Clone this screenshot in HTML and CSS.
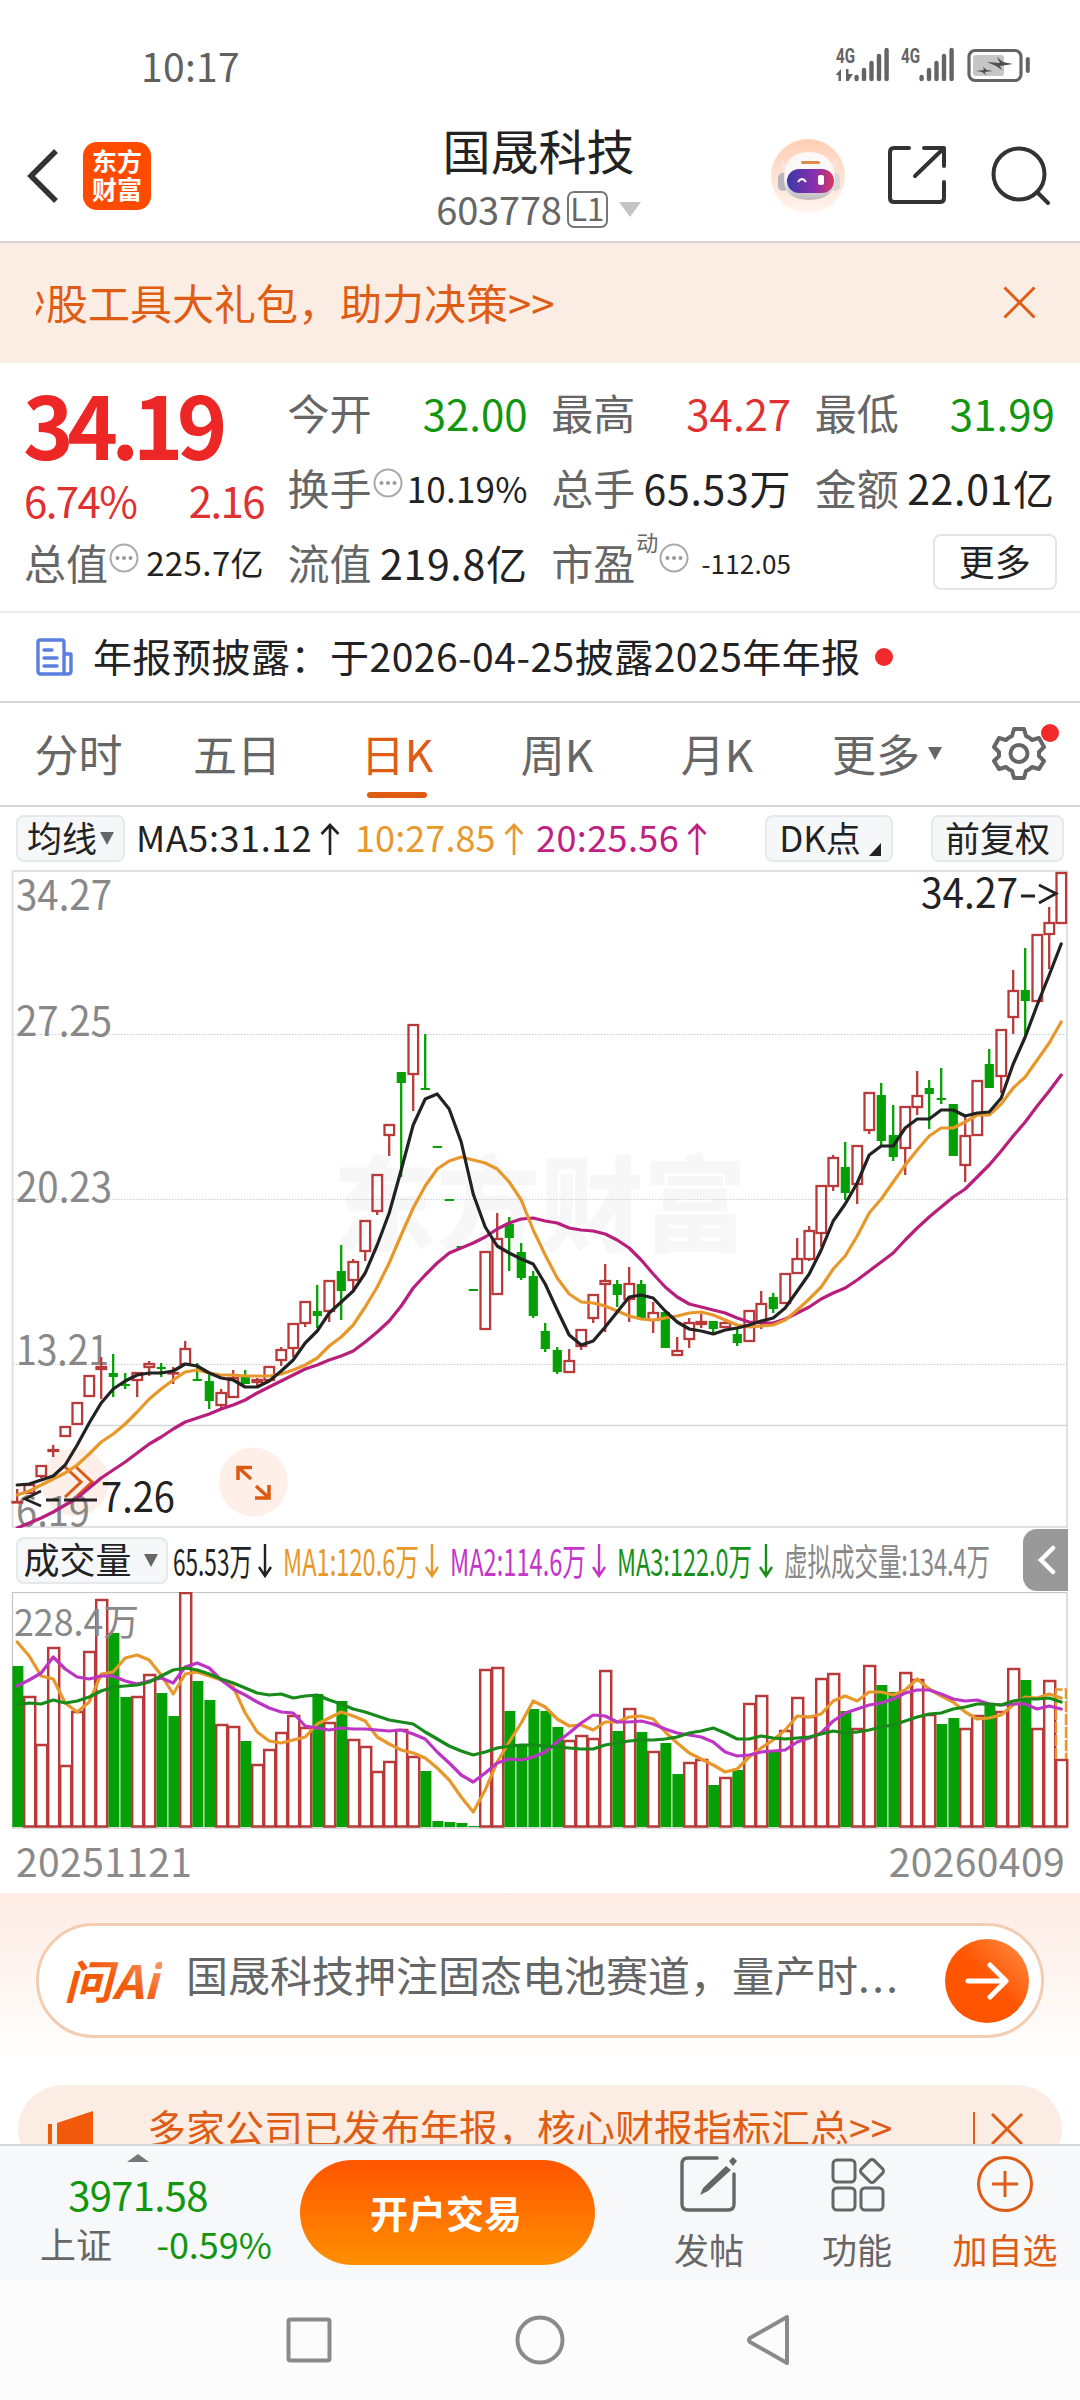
FILE: index.html
```html
<!DOCTYPE html>
<html lang="zh-CN">
<head>
  <meta charset="UTF-8">
  <meta name="viewport" content="width=device-width, initial-scale=1.0">
  <title>国晟科技 603778</title>
  <link rel="stylesheet" href="styles.css">
</head>
<body>

  <div class="status-bar">
    <span class="clock">10:17</span>
    <svg class="status-icons" width="200" height="40" viewBox="832 44 200 40">
      <g fill="#646464">
        <text x="836" y="63" class="net" textLength="19" lengthAdjust="spacingAndGlyphs">4G</text>
        <text x="901" y="63" class="net" textLength="19" lengthAdjust="spacingAndGlyphs">4G</text>
        <path d="M835.500 75l5.500-6v12h-2.500v-6zM846 69h2.500v5h4.500l-4.500 7h-2.500z"/>
      </g>
      <g stroke="#646464" stroke-width="4.400" stroke-linecap="round">
        <path d="M856.600 77v2M864 70v9M871.500 63v16M879 56v23M886.600 50v29"/>
        <path d="M921.600 77v2M929 70v9M936.500 63v16M944 56v23M951.600 50v29"/>
      </g>
      <rect x="969" y="50.500" width="52" height="30" rx="6" fill="none" stroke="#646464" stroke-width="3.200"/>
      <rect x="973" y="55" width="31" height="21" rx="3" fill="#c6c6c6"/>
      <path d="M987 62l13 1-3-6 6 5 10 2-13 2 2 4-6-4zM976 71l8-1-1-3 4 3 6 1-8 1 1 3-4-3z" fill="#505050"/>
      <path d="M1027.800 59v12" stroke="#646464" stroke-width="4" stroke-linecap="round"/>
    </svg>
  </div>

  <header>
    <div class="header-left">
      <svg width="34" height="60" viewBox="0 0 34 60"><path d="M31 5L6 30L31 55" fill="none" stroke="#333" stroke-width="5.500"/></svg>
      <div class="logo"><span>东方</span><span>财富</span></div>
    </div>
    <div class="stock">
      <h1>国晟科技</h1>
      <div class="code">603778<span class="level">L1</span><i class="caret"></i></div>
    </div>
    <div class="header-right">
      <svg width="76" height="76" viewBox="0 0 76 76">
        <defs>
          <linearGradient id="halo" x1="0" y1="0" x2="0" y2="1"><stop offset="0" stop-color="#ffcfb5"/><stop offset="1" stop-color="#fff5ef"/></linearGradient>
          <linearGradient id="visor" x1="0" y1="0" x2="1" y2="0"><stop offset="0" stop-color="#3b3aa8"/><stop offset=".6" stop-color="#8b2fae"/><stop offset="1" stop-color="#d83a5c"/></linearGradient>
          <linearGradient id="helmet" x1="0" y1="0" x2="0" y2="1"><stop offset=".5" stop-color="#fbf8f8"/><stop offset="1" stop-color="#bdb8bd"/></linearGradient>
        </defs>
        <circle cx="38" cy="38" r="37" fill="url(#halo)"/>
        <path d="M9 18q1 7 8 8l3 3-6 6zM68 18q-1 7-7 8l-3 3 5 6z" fill="#f2e9e8"/>
        <rect x="8" y="35" width="10" height="18" rx="5" fill="#b9b5bc"/>
        <rect x="60" y="35" width="10" height="18" rx="5" fill="#d9d5da"/>
        <path d="M14 42Q14 14 39 14Q64 14 65 42Q65 61 39 62Q14 61 14 42z" fill="url(#helmet)"/>
        <rect x="17" y="31" width="47" height="24" rx="12" fill="url(#visor)"/>
        <rect x="31" y="23" width="19" height="3" rx="1.500" fill="#df8a45"/>
        <path d="M28 44q4-6 8 0" fill="none" stroke="#fff" stroke-width="2"/>
        <rect x="48" y="37" width="6" height="10" rx="2" fill="#fff"/>
      </svg>
      <svg class="share" width="60" height="60" viewBox="0 0 60 60" fill="none" stroke="#333" stroke-width="4" stroke-linecap="round" stroke-linejoin="round">
        <path d="M22 3H7Q3 3 3 7V53Q3 57 7 57H53Q57 57 57 53V37M37 3H57V21M56 4L28 31"/>
      </svg>
      <svg class="search" width="60" height="60" viewBox="0 0 60 60" fill="none" stroke="#333" stroke-width="4" stroke-linecap="round">
        <circle cx="28" cy="28" r="25.500"/><path d="M46 46L57 57"/>
      </svg>
    </div>
  </header>

  <div class="banner">
    <div class="marquee"><span>炒股工具大礼包，助力决策&gt;&gt;</span></div>
    <svg width="33" height="33" viewBox="0 0 33 33"><path d="M1.500 1.500L31.500 31.500M31.500 1.500L1.500 31.500" stroke="#de5c14" stroke-width="3"/></svg>
  </div>

  <section class="quote">
    <div class="price-cell">
      <div class="price">34.19</div>
      <div class="change"><span>6.74%</span><span>2.16</span></div>
    </div>
    <div class="cell"><label>今开</label><b class="down">32.00</b></div>
    <div class="cell"><label>最高</label><b class="up">34.27</b></div>
    <div class="cell"><label>最低</label><b class="down">31.99</b></div>
    <div class="cell"><label>换手<svg class="tip"><use href="#tip"/></svg></label><b class="mid">10.19%</b></div>
    <div class="cell"><label>总手</label><b>65.53万</b></div>
    <div class="cell"><label>金额</label><b>22.01亿</b></div>
    <div class="cell"><label>总值<svg class="tip"><use href="#tip"/></svg></label><b class="small">225.7亿</b></div>
    <div class="cell"><label>流值</label><b>219.8亿</b></div>
    <div class="cell"><label>市盈<sup>动</sup><svg class="tip"><use href="#tip"/></svg></label><b class="tiny">-112.05</b></div>
    <div class="cell end"><button class="more">更多</button></div>
  </section>

  <div class="news">
    <svg width="37" height="38" viewBox="0 0 37 38" fill="none" stroke="#5b7fe0" stroke-width="3.400" stroke-linejoin="round" stroke-linecap="round">
      <path d="M28 14V4Q28 2 26 2H4Q2 2 2 4V33Q2 36 5 36H32Q35 36 35 33V16H28V36M8 12H16M8 20H21M8 28H21"/>
    </svg>
    <span>年报预披露：于2026-04-25披露2025年年报</span>
    <i class="dot"></i>
  </div>

  <nav class="tabs">
    <div class="tab">分时</div>
    <div class="tab">五日</div>
    <div class="tab active">日K</div>
    <div class="tab">周K</div>
    <div class="tab">月K</div>
    <div class="tab drop">更多<i class="tri"></i></div>
    <div class="gear">
      <svg width="56" height="56" viewBox="0 0 56 56" fill="none" stroke="#666" stroke-width="4" stroke-linejoin="round">
        <path d="M23 4H33L35 11Q38 12 41 15L48 13L53 22L48 27V31L53 36L48 44L41 42Q38 45 35 46L33 53H23L21 46Q18 45 15 42L8 44L3 36L8 31V27L3 22L8 13L15 15Q18 12 21 11z"/>
        <circle cx="28" cy="28.500" r="8.500"/>
      </svg>
      <i class="dot"></i>
    </div>
  </nav>

  <div class="ma-bar">
    <button class="chip">均线<i class="tri"></i></button>
    <span class="ma ma5">MA5:31.12<svg class="arr"><use href="#arrow-up"/></svg></span>
    <span class="ma ma10">10:27.85<svg class="arr"><use href="#arrow-up"/></svg></span>
    <span class="ma ma20">20:25.56<svg class="arr"><use href="#arrow-up"/></svg></span>
    <button class="chip dk">DK点<i class="corner"></i></button>
    <button class="chip fq">前复权</button>
  </div>

  <svg id="kline" class="chart" width="1080" height="658" viewBox="0 870 1080 658"></svg>

  <div class="vol-bar">
    <button class="chip vol">成交量<i class="tri"></i></button>
    <svg class="vol-legend" width="830" height="60" viewBox="170 1530 830 60">
      <text x="173" y="1576" textLength="79" lengthAdjust="spacingAndGlyphs" fill="#222">65.53万</text>
      <text x="283" y="1576" textLength="136" lengthAdjust="spacingAndGlyphs" fill="#e8982a">MA1:120.6万</text>
      <text x="450" y="1576" textLength="136" lengthAdjust="spacingAndGlyphs" fill="#c436c8">MA2:114.6万</text>
      <text x="617" y="1576" textLength="135" lengthAdjust="spacingAndGlyphs" fill="#16901a">MA3:122.0万</text>
      <text x="784" y="1576" textLength="206" lengthAdjust="spacingAndGlyphs" fill="#888">虚拟成交量:134.4万</text>
      <g fill="none" stroke-width="2.400">
        <path d="M265 1544V1575M259 1567L265 1576L271 1567" stroke="#222"/>
        <path d="M432 1544V1575M426 1567L432 1576L438 1567" stroke="#e8982a"/>
        <path d="M599 1544V1575M593 1567L599 1576L605 1567" stroke="#c436c8"/>
        <path d="M766 1544V1575M760 1567L766 1576L772 1567" stroke="#16901a"/>
      </g>
    </svg>
    <div class="pull"><svg width="18" height="30" viewBox="0 0 18 30"><path d="M15 3L3 15L15 27" fill="none" stroke="#fff" stroke-width="4.500" stroke-linecap="round"/></svg></div>
  </div>

  <svg id="volume" class="chart" width="1080" height="237" viewBox="0 1592 1080 237"></svg>

  <div class="dates"><span>20251121</span><span>20260409</span></div>

  <section class="ai">
    <div class="ai-pill">
      <svg width="98" height="48" viewBox="64 1956 98 48">
        <defs><linearGradient id="ai" x1="0" y1="1" x2="1" y2="0"><stop offset=".5" stop-color="#f25a0c"/><stop offset="1" stop-color="#f9b08a"/></linearGradient></defs>
        <text class="ai-text" x="64" y="1998" fill="url(#ai)" textLength="94" lengthAdjust="spacingAndGlyphs">问Ai</text>
      </svg>
      <p>国晟科技押注固态电池赛道，量产时<span class="dots">...</span></p>
      <div class="go"><svg width="44" height="40" viewBox="0 0 44 40"><path d="M3 20H40M25 4L41 20L25 36" fill="none" stroke="#fff" stroke-width="5" stroke-linecap="round" stroke-linejoin="round"/></svg></div>
    </div>
  </section>

  <div class="notice-wrap">
    <div class="notice">
      <svg width="46" height="50" viewBox="0 0 46 50" fill="#f05a0a"><path d="M0 14H4V40H0zM9 13L45 1V50L9 38z"/><path d="M12 30H28V50H16z"/></svg>
      <span>多家公司已发布年报，核心财报指标汇总&gt;&gt;</span>
      <i class="bar"></i>
      <svg width="32" height="32" viewBox="0 0 32 32"><path d="M1 1L31 31M31 1L1 31" stroke="#de5c14" stroke-width="3"/></svg>
    </div>
  </div>

  <footer>
    <div class="index">
      <i class="tri-up"></i>
      <div class="point">3971.58</div>
      <div class="pct"><span>上证</span><span class="down">-0.59%</span></div>
    </div>
    <button class="trade">开户交易</button>
    <div class="action">
      <svg width="60" height="58" viewBox="0 0 60 58" fill="none" stroke="#666" stroke-width="3.400" stroke-linecap="round">
        <path d="M38 3H9Q3 3 3 9V49Q3 55 9 55H49Q55 55 55 49V19"/>
        <path d="M47 11L52 15L29 36L21 40L24 33zM50 6L54 2L58 6L54 11z" fill="#666" stroke="none"/>
      </svg>
      <span>发帖</span>
    </div>
    <div class="action">
      <svg width="60" height="58" viewBox="0 0 60 58" fill="none" stroke="#666" stroke-width="3">
        <rect x="6" y="5" width="22" height="22" rx="4"/><rect x="6" y="33" width="22" height="22" rx="4"/><rect x="34" y="33" width="22" height="22" rx="4"/>
        <rect x="36" y="7" width="18" height="18" rx="3" transform="rotate(45 45 16)"/>
      </svg>
      <span>功能</span>
    </div>
    <div class="action add">
      <svg width="60" height="58" viewBox="0 0 60 58" fill="none" stroke="#de5c14" stroke-width="3">
        <circle cx="30" cy="29" r="26.500"/><path d="M30 16V42M17 29H43"/>
      </svg>
      <span>加自选</span>
    </div>
  </footer>

  <div class="sys-nav">
    <svg width="1080" height="120" viewBox="0 0 1080 120" fill="none" stroke="#8a8a8a" stroke-width="4">
      <rect x="288.500" y="39.500" width="41" height="41" rx="2"/>
      <circle cx="540" cy="60" r="22.500"/>
      <path d="M787 37V83L750 62Q748 60 750 58z" stroke-linejoin="round"/>
    </svg>
  </div>

  <svg class="defs">
    <symbol id="tip" viewBox="0 0 30 30"><circle cx="15" cy="15" r="13.500" fill="none" stroke="#aaa" stroke-width="2"/><g fill="#999"><circle cx="8.500" cy="15" r="2"/><circle cx="15" cy="15" r="2"/><circle cx="21.500" cy="15" r="2"/></g></symbol>
    <symbol id="arrow-up" viewBox="0 0 20 32"><path d="M10 32V3M1.500 11L10 2L18.500 11" fill="none" stroke="currentColor" stroke-width="2.600"/></symbol>
  </svg>

  <script src="chart.js"></script>
</body>
</html>
```

FILE: styles.css
```css
* {
  box-sizing: border-box;
}

body {
  font-family: 'Noto Sans CJK SC', 'Noto Sans', sans-serif;
  margin: 0;
  width: 1080px;
  height: 2400px;
  overflow: hidden;
  background-color: #fff;
  color: #222;
  line-height: 1;
}

i {
  display: block;
}

svg {
  display: block;
  flex: none;
}

button {
  font-family: inherit;
  line-height: 1;
  padding: 0;
  color: #222;
}

.defs {
  display: none;
}

.down {
  color: #12960f;
}

.up {
  color: #e03030;
}

/* 状态栏 */
.status-bar {
  display: flex;
  justify-content: space-between;
  height: 100px;
  padding: 44px 48px 0 141px;
}

.clock {
  margin-top: 2px;
  font-size: 39px;
  letter-spacing: 0.3px;
  color: #606060;
}

.net {
  font-family: 'Roboto', sans-serif;
  font-size: 21px;
  font-weight: bold;
}

/* 顶部 */
header {
  display: grid;
  grid-template-columns: 340px 1fr 340px;
  height: 143px;
  border-bottom: 2px solid #d4d4d4;
}

.header-left {
  display: flex;
  align-items: center;
  padding-left: 25px;
  padding-bottom: 8px;
  padding-top: 18px;
}

.logo {
  width: 68px;
  height: 68px;
  margin-left: 24px;
  border-radius: 14px;
  background-color: #ff4b00;
  color: #fff;
  display: flex;
  flex-direction: column;
  justify-content: center;
  align-items: center;
  gap: 3px;
  padding-bottom: 3px;
  font-size: 25px;
  font-weight: bold;
}

.stock {
  text-align: center;
}

.stock h1 {
  margin: 24px 0 0 -3px;
  font-size: 48px;
  font-weight: 400;
  line-height: 50px;
}

.code {
  display: flex;
  justify-content: center;
  align-items: center;
  margin: 16px 0 0 -3px;
  height: 38px;
  font-size: 38px;
  letter-spacing: -0.2px;
  color: #666;
}

.level {
  border: 2px solid #777;
  border-radius: 7px;
  width: 41px;
  height: 37px;
  margin-left: 5px;
  font-size: 31px;
  line-height: 29px;
}

.caret {
  margin-left: 11px;
  border: 11px solid transparent;
  border-top: 15px solid #c4c4c4;
  border-bottom: 0;
}

.header-right {
  display: flex;
  align-items: flex-start;
  padding: 38px 0 0 30px;
}

.share {
  margin: 7px 0 0 41px;
}

.search {
  margin: 8px 0 0 44px;
}

.banner {
  display: flex;
  align-items: center;
  justify-content: space-between;
  height: 120px;
  padding: 0 44px 2px 36px;
  background-color: #fcede4;
  color: #de5c14;
}

.marquee {
  width: 540px;
  overflow: hidden;
  font-size: 42px;
  line-height: 60px;
  white-space: nowrap;
}

.marquee span {
  margin-left: -32px;
}

/* 行情 */
.quote {
  display: grid;
  grid-template-columns: repeat(4, 238px);
  grid-template-rows: repeat(3, 75px);
  column-gap: 25.6px;
  height: 250px;
  padding: 11px 0 0 26px;
  border-bottom: 2px solid #ececec;
}

.price-cell {
  grid-row: span 2;
}

.price {
  height: 100px;
  padding-top: 6px;
  margin-left: -3px;
  font-size: 86px;
  font-weight: bold;
  letter-spacing: -6.6px;
  color: #ed2626;
}

.change {
  display: flex;
  justify-content: space-between;
  margin-left: -2px;
  padding-top: 5px;
  font-size: 42px;
  letter-spacing: -1.6px;
  color: #e03030;
}

.cell {
  display: flex;
  justify-content: space-between;
  align-items: center;
  white-space: nowrap;
}

.cell.end {
  justify-content: flex-end;
  margin-right: -2px;
}

.cell label {
  display: flex;
  align-items: center;
  margin-left: -2px;
  font-size: 42px;
  color: #666;
}

.cell sup {
  align-self: flex-start;
  font-size: 22px;
  margin: -11px 0 0 1px;
}

.cell b {
  font-weight: 400;
  font-size: 42px;
  letter-spacing: 0;
  padding-top: 2px;
}

.cell:nth-child(n+5) b {
  font-size: 41px;
  letter-spacing: 0.7px;
}

.cell:nth-child(n+5) b.mid {
  font-size: 35px;
  letter-spacing: 0.2px;
}

.cell:nth-child(n+5) b.small {
  font-size: 33px;
  letter-spacing: 0.4px;
}

.cell:nth-child(n+5) b.tiny {
  font-size: 26px;
  letter-spacing: 0.2px;
}

.tip {
  width: 30px;
  height: 30px;
  margin-left: 1px;
  margin-top: -7px;
}

.more {
  width: 124px;
  height: 56px;
  border: 2px solid #e4e4e4;
  border-radius: 8px;
  background-color: #fff;
  font-size: 36px;
  padding-bottom: 4px;
}

/* 公告 */
.news {
  display: flex;
  align-items: center;
  height: 90px;
  padding-left: 36px;
  border-bottom: 2px solid #d8d8d8;
}

.news span {
  margin: -4px 14px 0 20px;
  font-size: 39px;
  letter-spacing: 0.5px;
}

.dot {
  width: 18px;
  height: 18px;
  border-radius: 50%;
  background-color: #f02a2a;
}

.tabs {
  display: flex;
  align-items: center;
  height: 104px;
  border-bottom: 2px solid #d8d8d8;
  font-size: 44px;
  color: #666;
}

.tab {
  display: flex;
  flex-direction: column;
  justify-content: center;
  align-items: center;
  width: 160px;
  height: 102px;
  padding-bottom: 2px;
}

.tab:first-child {
  width: 157px;
}

.tab.active {
  color: #de5c14;
  padding-bottom: 0;
}

.tab.active::after {
  content: '';
  width: 60px;
  height: 6px;
  margin: 17px 0 -21px;
  border-radius: 3px;
  background-color: #de5c14;
}

.tab.drop {
  flex-direction: row;
  gap: 8px;
  padding-left: 20px;
}

.tri {
  border: 7px solid transparent;
  border-top: 13px solid #666;
  border-bottom: 0;
}

.gear {
  display: flex;
  margin-left: 34px;
  margin-top: -2px;
}

.gear .dot {
  margin: -1px 0 0 -6px;
}

.ma-bar {
  display: flex;
  align-items: center;
  height: 63px;
  padding-left: 16px;
}

.chip {
  display: flex;
  justify-content: center;
  align-items: center;
  height: 47px;
  border: 2px solid #e6e8ea;
  border-radius: 8px;
  background-color: #f6f7f9;
  font-size: 35px;
  padding-bottom: 4px;
}

.ma-bar .chip {
  width: 109px;
}

.chip .tri {
  margin: 4px 0 0 3px;
}

.ma {
  display: flex;
  align-items: center;
  font-size: 36px;
  padding-bottom: 5px;
}

.arr {
  width: 20px;
  height: 32px;
  margin: 5px 0 0 8px;
}

.ma5 {
  width: 219px;
  margin-left: 11px;
  letter-spacing: 0.6px;
}

.ma10 {
  width: 181px;
  letter-spacing: 0.1px;
  color: #e8982a;
}

.ma20 {
  width: 229px;
  letter-spacing: 0.4px;
  color: #c02080;
}

.ma-bar .dk {
  width: 128px;
  padding-left: 2px;
}

.corner {
  align-self: flex-end;
  margin: 0 0 0 8px;
  border-left: 12px solid transparent;
  border-bottom: 13px solid #222;
}

.ma-bar .fq {
  width: 133px;
  margin-left: 38px;
}

/* 图表 */
.chart text {
  fill: #888;
}

.chart .mark {
  fill: #222;
}

.chart .watermark {
  fill: #f7f7f7;
  font-weight: 900;
}

.vol-bar {
  display: flex;
  align-items: center;
  height: 64px;
  padding: 0 12px 0 16px;
}

.chip.vol {
  width: 152px;
  font-size: 36px;
  margin-right: 2px;
  padding-right: 3px;
}

.chip.vol .tri {
  margin-left: 12px;
}

.vol-legend {
  font-size: 37px;
}

.pull {
  display: flex;
  align-items: center;
  width: 45px;
  height: 62px;
  margin-left: 23px;
  padding-left: 15px;
  border-radius: 14px 0 0 14px;
  background-color: #999;
}

.dates {
  display: flex;
  justify-content: space-between;
  height: 64px;
  padding: 12px 15px 0 16px;
  font-size: 39px;
  letter-spacing: 0.4px;
  color: #8a8a8a;
}

.ai {
  height: 172px;
  padding: 30px 36px 0;
  background: linear-gradient(to bottom, #fdece4, #fff);
}

.ai-pill {
  display: flex;
  align-items: center;
  height: 115px;
  padding: 0 11px 0 25px;
  border: 3px solid #f3cdb2;
  border-radius: 58px;
  background-color: #fff;
}

.ai-text {
  font-size: 46px;
  font-weight: bold;
  font-style: italic;
}

.ai-pill p {
  width: 735px;
  margin: 0 24px;
  padding-bottom: 13px;
  font-size: 42px;
  white-space: nowrap;
  color: #666;
}

.dots {
  letter-spacing: 2.5px;
}

.go {
  display: flex;
  justify-content: center;
  align-items: center;
  width: 84px;
  height: 84px;
  flex: none;
  border-radius: 50%;
  background: linear-gradient(45deg, #ff5400 50%, #ff9048);
}

.notice-wrap {
  height: 79px;
  padding: 20px 18px 0;
  overflow: hidden;
}

.notice {
  display: flex;
  align-items: flex-start;
  height: 90px;
  padding: 25px 0 0 30px;
  border-radius: 50px;
  background-color: #fcede4;
  color: #de5c14;
}

.notice span {
  width: 823px;
  margin: -3px 0 0 53px;
  font-size: 39px;
  white-space: nowrap;
}

.notice .bar {
  width: 2px;
  height: 50px;
  margin: 2px 16px 0 3px;
  background-color: #de5c14;
}

.notice svg:last-child {
  margin-top: 3px;
}

/* 底部 */
footer {
  display: flex;
  height: 136px;
  border-top: 2px solid #d4d6d8;
  background-color: #f6f8fa;
}

.index {
  display: flex;
  flex-direction: column;
  align-items: center;
  width: 276px;
  padding: 8px 0 0;
}

.tri-up {
  border: 11px solid transparent;
  border-bottom: 8px solid #777;
  border-top: 0;
}

.point {
  margin-top: 12px;
  font-size: 40px;
  letter-spacing: -0.7px;
  color: #12960f;
}

.pct {
  display: flex;
  justify-content: space-between;
  width: 232px;
  margin: 11px -36px 0 0;
  font-size: 36px;
  letter-spacing: 0;
  color: #666;
}

.trade {
  width: 295px;
  height: 105px;
  margin: 14px 40px 0 24px;
  border: none;
  border-radius: 53px;
  background: linear-gradient(to bottom, #ff5500, #ff8f00);
  color: #fff;
  font-size: 38px;
  font-weight: bold;
  padding: 0 3px 2px 0;
}

.action {
  display: flex;
  flex-direction: column;
  align-items: center;
  width: 148px;
  padding-top: 9px;
  font-size: 35px;
  color: #666;
}

.action span {
  margin-top: 18px;
}

.action.add {
  color: #de5c14;
}

.sys-nav {
  height: 120px;
  background-color: #fcfcfc;
}
```

FILE: chart.js
```js
const RED = '#b83a3a';
const GREEN = '#05a005';
const STEP = 12;
const X0 = 17.2;

// 方向, 实体上沿, 实体下沿, 最高, 最低
const candles = [
  ['r',1501,1502,1489,1503],['r',1484,1493],['r',1465,1476,1465,1478],['r',1449,1451,1445,1457],['r',1426,1436,1426,1437],
  ['r',1402,1424],['r',1375,1396],['r',1366,1369,1357,1399],['g',1373,1377,1354,1397],['g',1384,1386,1373,1389],
  ['r',1372,1380,1372,1397],['r',1363,1367,1361,1376],['g',1367,1369,1363,1377],['r',1372,1373,1367,1384],['r',1348,1364,1341,1364],
  ['g',1379,1380,1363,1380],['g',1381,1401,1375,1409],['r',1392,1405,1389,1408],['r',1377,1397,1370,1397],['g',1377,1384,1370,1384],
  ['r',1379,1382,1378,1386],['r',1366,1380],['r',1349,1360,1347,1366],['r',1323,1348,1323,1357],['r',1301,1323,1301,1327],
  ['g',1311,1316,1285,1328],['r',1280,1311,1280,1322],['g',1271,1291,1245,1320],['r',1261,1280,1259,1292],['r',1220,1251,1220,1261],
  ['r',1174,1211,1174,1215],['r',1124,1135,1124,1156],['g',1072,1083,1072,1177],['r',1024,1074,1024,1111],['g',1088,1090,1034,1090],
  ['g',1146,1148],['g',1199,1201],['g',1246,1248],['g',1289,1291],['r',1251,1329],
  ['r',1238,1294,1213,1294],['g',1224,1238,1217,1271],['g',1252,1278,1243,1280],['g',1276,1316,1271,1318],['g',1331,1349,1323,1352],
  ['g',1350,1372,1347,1374],['r',1360,1372,1349,1372],['r',1329,1346,1329,1350],['r',1294,1318,1294,1323],['r',1280,1284,1264,1332],
  ['g',1284,1295,1280,1307],['r',1283,1299,1267,1322],['g',1284,1318,1280,1318],['r',1312,1320,1302,1333],['g',1312,1348],
  ['r',1350,1355,1337,1355],['r',1322,1339,1318,1348],['r',1321,1324,1314,1328],['g',1321,1329,1321,1333],['r',1322,1327,1319,1327],
  ['g',1334,1343,1329,1346],['r',1310,1341],['r',1303,1322,1291,1329],['g',1297,1309,1293,1313],['r',1273,1303],
  ['r',1258,1273,1238,1273],['r',1230,1259,1226,1261],['r',1185,1233,1185,1247],['r',1157,1186,1155,1191],['g',1167,1193,1142,1200],
  ['r',1145,1184,1145,1204],['r',1092,1130,1092,1134],['g',1095,1141,1083,1145],['g',1135,1157,1105,1161],['r',1106,1148,1106,1175],
  ['r',1095,1107,1071,1115],['g',1088,1094,1080,1129],['g',1098,1099,1068,1104],['g',1104,1156],['r',1135,1165,1116,1182],
  ['r',1080,1135],['g',1064,1088,1049,1088],['r',1029,1076,1029,1093],['r',990,1017,970,1034],['g',990,1001,948,1037],
  ['r',934,1001],['r',922,934,907,969],['r',872,923]
];

const ma5 = [1485,1484,1480,1476,1465,1445,1423,1403,1389,1381,1375,1373,1373,1371,1364,1366,1373,1378,1380,1387,1387,1381,1371,1360,1343,1331,1313,1302,1291,1273,1245,1213,1170,1125,1099,1094,1109,1142,1194,1227,1246,1253,1259,1264,1284,1310,1335,1345,1341,1327,1312,1297,1295,1298,1311,1322,1329,1331,1334,1330,1328,1325,1321,1318,1308,1291,1274,1250,1221,1204,1183,1155,1146,1146,1128,1119,1119,1110,1110,1116,1113,1112,1098,1064,1037,1005,975,944];
const ma10 = [1495,1491,1485,1479,1473,1465,1454,1442,1434,1424,1412,1399,1389,1380,1372,1370,1373,1375,1375,1376,1376,1376,1374,1370,1365,1358,1346,1337,1325,1307,1287,1263,1235,1208,1186,1169,1161,1157,1160,1163,1169,1182,1200,1230,1255,1278,1294,1302,1303,1306,1311,1316,1319,1320,1318,1316,1313,1312,1315,1320,1325,1327,1326,1325,1320,1310,1299,1287,1269,1256,1236,1213,1199,1182,1165,1150,1136,1128,1128,1122,1115,1115,1104,1088,1077,1060,1043,1022];
const ma20 = [1528,1523,1518,1512,1505,1498,1488,1478,1470,1462,1453,1444,1437,1429,1422,1418,1414,1409,1405,1400,1393,1387,1381,1375,1369,1365,1360,1356,1351,1342,1332,1321,1306,1288,1275,1263,1253,1248,1243,1237,1229,1223,1219,1218,1221,1223,1228,1230,1231,1234,1240,1248,1260,1274,1287,1297,1304,1307,1310,1313,1318,1322,1323,1323,1319,1313,1307,1299,1293,1288,1280,1271,1262,1253,1240,1228,1217,1207,1197,1189,1177,1165,1151,1136,1122,1106,1091,1075];

// 成交量柱: 方向 + 柱顶
const volumes = 'g1666 r1696 r1744 r1647 r1765 r1711 r1651 r1599 g1633 g1697 r1696 r1674 g1693 g1716 r1592 g1681 g1700 r1724 r1726 g1741 r1764 r1749 r1732 r1715 r1727 g1694 r1722 g1701 r1739 r1746 r1771 r1761 r1729 r1756 g1771 g1821 g1822 g1823 g1826 r1669 r1667 g1711 g1744 g1709 g1711 g1727 r1740 r1735 r1738 r1670 g1731 r1708 g1732 r1751 g1743 g1774 r1762 r1759 g1785 r1777 g1770 r1703 r1695 g1750 r1730 r1697 r1716 r1678 r1673 g1711 r1728 r1665 g1685 g1692 r1672 r1679 r1714 g1724 g1718 r1728 r1715 g1703 r1711 r1668 g1680 r1728 r1680 r1759'.split(' ');

const vma1 = [1642,1656,1676,1679,1703,1712,1702,1674,1672,1658,1655,1660,1675,1694,1674,1672,1676,1680,1687,1713,1732,1741,1743,1740,1737,1724,1718,1712,1716,1721,1737,1744,1750,1753,1758,1768,1780,1797,1812,1790,1762,1742,1723,1701,1707,1719,1726,1725,1730,1722,1722,1717,1716,1719,1732,1743,1753,1759,1765,1772,1769,1757,1748,1740,1730,1716,1717,1714,1701,1696,1701,1692,1692,1695,1690,1679,1689,1696,1702,1712,1719,1718,1715,1705,1697,1698,1694,1698];
const vma2 = [1686,1680,1673,1657,1669,1677,1679,1676,1676,1681,1684,1681,1678,1683,1667,1663,1668,1680,1689,1695,1702,1708,1712,1713,1726,1728,1730,1728,1729,1729,1730,1731,1730,1734,1739,1752,1763,1775,1782,1773,1763,1759,1760,1757,1752,1742,1733,1723,1715,1716,1722,1722,1721,1724,1729,1733,1735,1737,1742,1752,1756,1755,1752,1751,1750,1742,1738,1733,1721,1713,1709,1705,1703,1699,1693,1690,1690,1694,1699,1701,1700,1704,1705,1704,1704,1709,1706,1709];
const vma3 = [1705,1703,1704,1700,1703,1701,1697,1691,1687,1686,1685,1682,1676,1670,1668,1670,1674,1679,1683,1688,1693,1695,1694,1698,1696,1695,1700,1704,1709,1712,1716,1720,1722,1724,1732,1739,1746,1751,1755,1752,1748,1746,1745,1745,1746,1747,1748,1749,1749,1745,1743,1741,1740,1740,1739,1737,1733,1731,1728,1733,1739,1739,1736,1738,1739,1738,1737,1734,1731,1733,1732,1730,1727,1725,1721,1717,1714,1713,1709,1707,1704,1704,1705,1701,1699,1699,1698,1702];

function line(data, color) {
  const pts = data.map((y, i) => `${(X0 + i * STEP).toFixed(1)},${y}`).join(' ');
  return `<polyline points="${pts}" fill="none" stroke="${color}" stroke-width="3.2" stroke-linejoin="round" stroke-linecap="round"/>`;
}

function label(x, y, w, text, size, cls) {
  return `<text x="${x}" y="${y}" font-size="${size}" textLength="${w}" lengthAdjust="spacingAndGlyphs" class="${cls || ''}">${text}</text>`;
}

function drawKline() {
  let s = '<text class="watermark" x="333" y="1244" font-size="104" textLength="414" lengthAdjust="spacingAndGlyphs">东方财富</text>';
  s += '<rect x="12.5" y="871" width="1054.500" height="656" fill="none" stroke="#e0e2e2" stroke-width="2"/>';
  [1034, 1199, 1364].forEach(y => {
    s += `<path d="M13 ${y}.500H1067" stroke="#ccc" stroke-width="1" stroke-dasharray="1.500 1.500"/>`;
  });
  s += '<path d="M88 1425.500H1067" stroke="#d6d8d8" stroke-width="1.500"/>';
  s += '<circle cx="75" cy="1482" r="34" fill="#fef0e9"/><circle cx="253.500" cy="1482" r="34.500" fill="#fef0e9"/>';
  s += '<g fill="none" stroke="#dc5a14" stroke-width="3"><path d="M65 1467L81 1482L65 1497M76 1467L92 1482L76 1497"/>';
  s += '<path stroke-width="3.500" d="M238 1480V1467.500H252M239 1468L251 1479M269 1485V1498H255M268 1497L256 1486"/></g>';
  s += label(16, 910, 96, '34.27', 41) + label(16, 1036, 96, '27.25', 41) + label(16, 1202, 96, '20.23', 41);
  s += label(16, 1365, 93, '13.21', 41) + label(16, 1526, 74, '6.19', 41);

  candles.forEach((c, i) => {
    const [dir, top, bottom, high = top, low = bottom] = c;
    const x = X0 + i * STEP;
    const color = dir === 'r' ? RED : GREEN;
    s += `<path d="M${x} ${high}V${top}M${x} ${bottom}V${low}" stroke="${color}" stroke-width="2.300"/>`;
    if (dir === 'r') {
      s += `<rect x="${x - 4.7}" y="${top + 1}" width="9.600" height="${Math.max(bottom - top - 1, 0.5)}" fill="none" stroke="${color}" stroke-width="2.300"/>`;
    } else {
      s += `<rect x="${x - 4.5}" y="${top}" width="9.200" height="${Math.max(bottom - top, 2)}" fill="${color}"/>`;
    }
  });

  s += line(ma20, '#b81f7c') + line(ma10, '#e8982a') + line(ma5, '#222');
  s += label(921, 908, 97, '34.27', 41, 'mark');
  s += '<path d="M1021 896H1035M1039 885L1056 893.500L1039 903" fill="none" stroke="#222" stroke-width="2.800"/>';
  s += '<path d="M41 1491L25 1499L41 1506M46 1500H59M64 1500H97" fill="none" stroke="#222" stroke-width="2.800"/>';
  s += label(101, 1512, 74, '7.26', 41, 'mark');
  document.getElementById('kline').innerHTML = s;
}

function drawVolume() {
  let s = '<rect x="12.5" y="1592.500" width="1054.500" height="235.500" fill="none" stroke="#c4c6c6" stroke-width="1.200"/>';
  volumes.forEach((v, i) => {
    const x = X0 + i * STEP;
    const top = Number(v.slice(1));
    if (v[0] === 'r') {
      s += `<rect x="${x - 5}" y="${top + 1}" width="11" height="${1825.5 - top}" fill="#fff" stroke="${RED}" stroke-width="2.500"/>`;
    } else {
      s += `<rect x="${x - 4.8}" y="${top}" width="11" height="${1827 - top}" fill="${GREEN}"/>`;
    }
  });
  // 虚拟成交量
  s += '<path d="M1056 1759V1689.500H1066V1759" fill="none" stroke="#e8982a" stroke-width="2.400" stroke-dasharray="11 2"/>';
  s += label(14, 1636, 125, '228.4万', 37);
  s += line(vma1, '#e8982a') + line(vma2, '#bd35c4') + line(vma3, '#178a1a');
  document.getElementById('volume').innerHTML = s;
}

drawKline();
drawVolume();
```
